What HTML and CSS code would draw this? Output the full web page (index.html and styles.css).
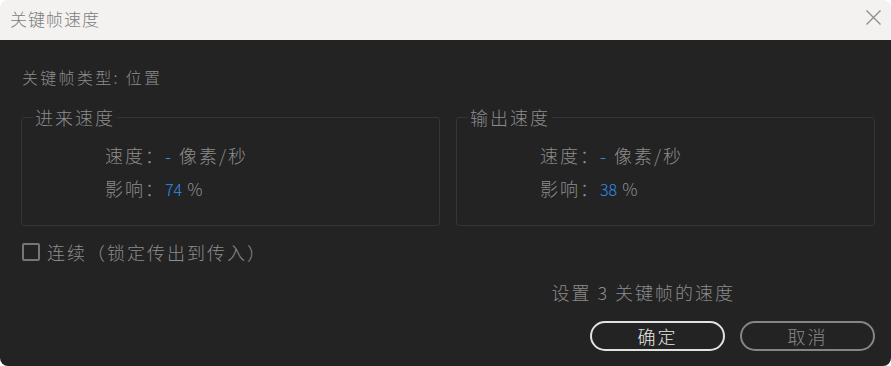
FILE: index.html
```html
<!DOCTYPE html>
<html lang="zh-CN">
<head>
<meta charset="utf-8">
<title>关键帧速度</title>
<link rel="stylesheet" href="styles.css">
</head>
<body>
<div class="window">
  <div class="titlebar">
    <span class="title">关键帧速度</span>
    <svg class="close" width="15" height="15" viewBox="0 0 15 15"><path d="M0.5 0.5 L14.5 14.5 M14.5 0.5 L0.5 14.5" stroke="#8f8f8f" stroke-width="1.4" fill="none"/></svg>
  </div>
  <div class="content">
    <div class="type">关键帧类型: 位置</div>
    <div class="groups">
      <fieldset class="group">
        <legend>进来速度</legend>
        <div class="row"><span class="lbl">速度：</span><span class="dash">-</span><span>像素/秒</span></div>
        <div class="row"><span class="lbl">影响：</span><span class="val">74</span><span class="pct">%</span></div>
      </fieldset>
      <fieldset class="group">
        <legend>输出速度</legend>
        <div class="row"><span class="lbl">速度：</span><span class="dash">-</span><span>像素/秒</span></div>
        <div class="row"><span class="lbl">影响：</span><span class="val">38</span><span class="pct">%</span></div>
      </fieldset>
    </div>
    <label class="check"><span class="box"></span>连续（锁定传出到传入）</label>
    <div class="summary">设置 3 关键帧的速度</div>
    <div class="buttons">
      <button class="btn primary">确定</button>
      <button class="btn">取消</button>
    </div>
  </div>
</div>
</body>
</html>
```

FILE: styles.css
```css
html, body {
  margin: 0;
  padding: 0;
  background: #ffffff;
}
body {
  font-family: "Noto Sans CJK SC", "Noto Sans", "Liberation Sans", sans-serif;
  font-weight: 300;
}
.window {
  width: 891px;
  height: 366px;
  border-radius: 8px;
  overflow: hidden;
  display: flex;
  flex-direction: column;
}
.titlebar {
  height: 40px;
  flex: none;
  background: #f3f2f1;
  display: flex;
  align-items: center;
  justify-content: space-between;
  padding: 0 10px 2px 10px;
  box-sizing: border-box;
}
.title {
  font-size: 17px;
  line-height: 20px;
  letter-spacing: 1px;
  color: #7c7c7c;
}
.close {
  display: block;
  margin-top: -4px;
}
.content {
  flex: 1;
  background: #232323;
  padding: 27px 16px 0 21px;
  display: flex;
  flex-direction: column;
  color: #8c8c8c;
}
.type {
  font-size: 16px;
  line-height: 20px;
  letter-spacing: 2.3px;
  padding-left: 1px;
}
.groups {
  display: flex;
  gap: 16px;
  margin-top: 19px;
}
.group {
  flex: 1;
  margin: 0;
  border: 1px solid #353535;
  border-radius: 3px;
  padding: 0 0 19px 11px;
  min-width: 0;
}
.group legend {
  font-size: 18px;
  line-height: 22px;
  padding: 0 2px;
  color: #8c8c8c;
  letter-spacing: 2px;
}
.row {
  display: flex;
  align-items: baseline;
  margin-left: 72px;
  font-size: 18px;
  line-height: 33px;
  letter-spacing: 2px;
}
.row:first-of-type {
  margin-top: 11px;
}
.dash {
  color: #3a8ee6;
  letter-spacing: 0;
  margin-right: 8px;
}
.val {
  color: #2e8ff0;
  font-size: 16px;
  letter-spacing: 0;
}
.pct {
  margin-left: 5px;
  font-size: 17px;
  letter-spacing: 0;
}
.check {
  display: flex;
  align-items: center;
  margin-top: 16px;
  font-size: 18px;
  line-height: 20px;
  letter-spacing: 2px;
  padding-left: 1px;
}
.box {
  width: 14px;
  height: 14px;
  border: 2px solid #767676;
  border-radius: 2px;
  margin-right: 7px;
}
.summary {
  align-self: flex-end;
  margin-right: 140px;
  margin-top: 19px;
  font-size: 18px;
  line-height: 22px;
  letter-spacing: 2px;
}
.buttons {
  display: flex;
  justify-content: flex-end;
  gap: 15px;
  margin-top: 18px;
}
.btn {
  width: 135px;
  height: 30px;
  box-sizing: border-box;
  border: 2px solid #858585;
  border-radius: 15px;
  background: transparent;
  color: #8a8a8a;
  font-family: "Noto Sans CJK SC", "Noto Sans", sans-serif;
  font-weight: 300;
  font-size: 18px;
  line-height: 24px;
  padding: 0;
  letter-spacing: 2px;
}
.btn.primary {
  border-color: #e2e2e2;
  color: #e6e6e6;
}
```
